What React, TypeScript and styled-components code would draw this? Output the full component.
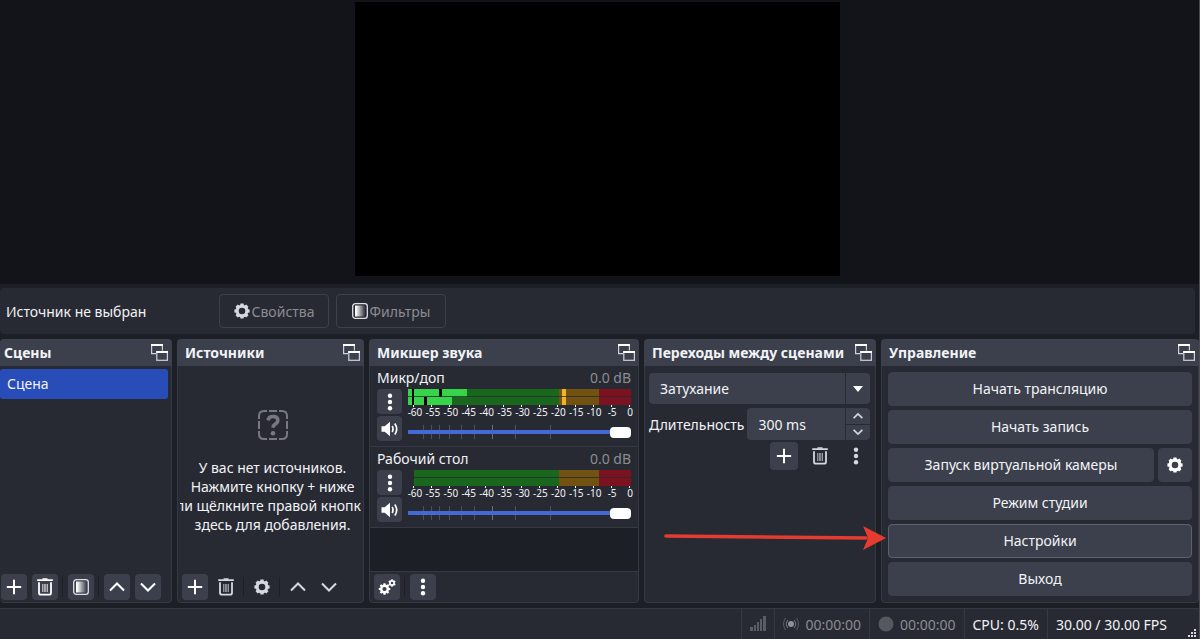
import React from 'react';
import styled, { createGlobalStyle, css } from 'styled-components';

const color = {
  base: '#1d1f26',
  panel: '#272a33',
  raised: '#3c404d',
  line: '#353945',
  text: '#f2f3f6',
  dim: '#8b8c91',
};

const Global = createGlobalStyle`
  * { box-sizing: border-box; }
  body {
    margin: 0;
    background: ${color.base};
    color: ${color.text};
    font: 14px/19px "Noto Sans", "Open Sans", sans-serif;
  }
  button, select, input { font: inherit; color: inherit; }
`;

const Window = styled.div`
  display: flex;
  flex-direction: column;
  min-height: 100vh;
  border-right: 1px solid #4a4c52;
  overflow: hidden;
`;

const Preview = styled.main`
  flex: 1;
  display: flex;
  justify-content: center;
  padding: 2px 4px 8px 0;
  background: #131419;
`;

const Canvas = styled.div`
  height: 274px;
  aspect-ratio: 485 / 274;
  background: #000;
`;

const ContextBar = styled.section`
  display: flex;
  align-items: center;
  height: 46px;
  margin: 4px 4px 5px 0;
  padding: 0 6px;
  border-radius: 4px;
  background: ${color.panel};
`;

const SourceName = styled.span`
  width: 213px;
`;

const OutlineButton = styled.button`
  display: flex;
  align-items: center;
  justify-content: center;
  gap: 2px;
  width: 110px;
  height: 34px;
  margin-right: 7px;
  padding: 0;
  border: 1px solid ${color.raised};
  border-radius: 4px;
  background: transparent;
  color: ${color.dim};
`;

const Docks = styled.div`
  display: grid;
  grid-template-columns: minmax(0, 172fr) minmax(0, 187fr) minmax(0, 270fr) minmax(0, 232fr) minmax(0, 318fr);
  gap: 5px;
  height: 264px;
`;

const DockFrame = styled.section`
  display: flex;
  flex-direction: column;
  min-width: 0;
  border-radius: 4px;
  background: ${color.panel};
  overflow: hidden;
`;

const DockHeader = styled.header<{ $flush?: boolean }>`
  display: flex;
  align-items: center;
  justify-content: space-between;
  flex: none;
  height: 27px;
  padding: 0 4px 0 ${(p) => (p.$flush ? 4 : 8)}px;
  background: ${color.raised};
`;

const DockTitle = styled.h2`
  margin: 0;
  font-size: 14px;
  font-weight: 700;
  white-space: nowrap;
`;

const BareButton = styled.button`
  display: flex;
  padding: 0;
  border: 0;
  background: none;
`;

const DockBody = styled.div<{ $flush?: boolean }>`
  display: flex;
  flex-direction: column;
  flex: 1;
  min-height: 0;
  border: 1px solid ${color.line};
  border-top: 0;
  border-left-width: ${(p) => (p.$flush ? 0 : 1)}px;
  border-radius: 0 0 4px 4px;
`;

const SceneList = styled.ul`
  flex: 1;
  margin: 0;
  padding: 3px 3px 0 0;
  list-style: none;
`;

const SceneItem = styled.li`
  height: 30px;
  padding: 0 7px;
  border-radius: 3px;
  background: #284cb8;
  line-height: 30px;
`;

const EmptySources = styled.div`
  display: flex;
  flex-direction: column;
  align-items: center;
  flex: 1;
  gap: 18px;
  margin: 0 2px;
  padding: 44px 0 0 4px;
  overflow: hidden;
  text-align: center;
  white-space: nowrap;
`;

const EmptyText = styled.p`
  margin: 0;
`;

const Toolbar = styled.div<{ $inset?: boolean }>`
  display: flex;
  align-items: center;
  padding: 2px 0 2px ${(p) => (p.$inset ? 4 : 1)}px;
  gap: 5px;
`;

const ToolButton = styled.button<{ $flat?: boolean; $tall?: boolean }>`
  display: flex;
  align-items: center;
  justify-content: center;
  flex: none;
  width: ${(p) => (p.$tall ? 28 : 26)}px;
  height: ${(p) => (p.$tall ? 28 : 26)}px;
  padding: 0;
  border: 0;
  border-radius: 4px;
  background: ${(p) => (p.$flat ? 'transparent' : color.raised)};
`;

const Divider = styled.span`
  width: 1px;
  height: 20px;
  margin-left: -1px;
  background: ${color.base};
`;

const Channel = styled.div`
  height: 81px;
  padding: 2px 7px 0;
  border-bottom: 1px solid ${color.line};
`;

const ChannelTop = styled.div`
  display: flex;
  justify-content: space-between;
  height: 20px;
`;

const Level = styled.span`
  color: ${color.dim};
`;

const ChannelBody = styled.div`
  display: flex;
  gap: 6px;
`;

const ChannelButtons = styled.div`
  display: flex;
  flex-direction: column;
  gap: 2px;
  padding-top: 1px;
`;

const SmallButton = styled(ToolButton)`
  width: 25px;
  height: 25px;
`;

const Meters = styled.div`
  flex: 1;
  min-width: 0;
  padding-top: 1px;
`;

const MeterArt = styled.svg`
  display: block;
  width: 100%;
  height: 18px;
`;

const Scale = styled.div`
  display: grid;
  grid-template-columns: repeat(13, 1fr);
  height: 11px;
  margin: 0 -8px 0 -2px;
  font-size: 10px;
  line-height: 11px;
  text-align: center;
`;

const Slider = styled.input`
  display: block;
  width: 100%;
  height: 14px;
  margin: 7px 0 0;
  appearance: none;
  background:
    linear-gradient(#4468d6, #4468d6) center / 100% 4px no-repeat,
    linear-gradient(90deg, transparent 15px, #4d515e 15px 16px, transparent 16px 23px, #4d515e 23px 24px, transparent 24px 31px, #4d515e 31px 32px, transparent 32px 41px, #4d515e 41px 42px, transparent 42px 53px, #4d515e 53px 54px, transparent 54px 66px, #4d515e 66px 67px, transparent 67px 84px, #6d717e 84px 85px, transparent 85px 107px, #4d515e 107px 108px, transparent 108px 142px, #4d515e 142px 143px, transparent 143px);
  &::-webkit-slider-thumb {
    appearance: none;
    width: 21px;
    height: 11px;
    border-radius: 4px;
    background: #fff;
  }
`;

const MixerRest = styled.div`
  flex: 1;
  background: ${color.base};
`;

const MixerToolbar = styled(Toolbar)`
  border-top: 1px solid ${color.line};
`;

const TransitionForm = styled.form`
  display: flex;
  flex-direction: column;
  gap: 4px;
  padding: 7px 5px 0 4px;
`;

const SelectBox = styled.div`
  position: relative;
  display: flex;
`;

const Select = styled.select`
  flex: 1;
  min-width: 0;
  height: 31px;
  padding: 0 11px;
  border: 0;
  border-radius: 4px;
  appearance: none;
  background: ${color.raised};
`;

const SelectArrow = styled.span`
  position: absolute;
  inset: 0 0 0 auto;
  display: flex;
  align-items: center;
  justify-content: center;
  width: 25px;
  border-left: 1px solid ${color.panel};
  pointer-events: none;
`;

const DurationRow = styled.div`
  display: flex;
  align-items: center;
  justify-content: space-between;
  gap: 3px;
`;

const Spin = styled.div`
  display: flex;
  flex: 1;
  height: 32px;
  border-radius: 4px;
  background: ${color.raised};
`;

const SpinInput = styled.input`
  flex: 1;
  width: 0;
  min-width: 0;
  padding: 0 11px;
  border: 0;
  background: none;
`;

const SpinButtons = styled.div`
  display: grid;
  grid-template-rows: 1fr 1fr;
  gap: 1px;
  width: 25px;
  border-left: 1px solid ${color.panel};
  background: linear-gradient(${color.panel}, ${color.panel}) center / 100% 1px no-repeat;
`;

const SpinButton = styled(BareButton)`
  align-items: center;
  justify-content: center;
`;

const TransitionTools = styled.div`
  display: flex;
  justify-content: flex-end;
  gap: 8px;
  margin-top: -2px;
`;

const Controls = styled.div`
  display: flex;
  flex-direction: column;
  gap: 4px;
  padding: 6px 6px 0;
`;

const ControlRow = styled.div`
  display: flex;
  gap: 4px;
`;

const ControlButton = styled.button<{ $focus?: boolean; $square?: boolean }>`
  display: flex;
  align-items: center;
  justify-content: center;
  height: 34px;
  padding: 0 0 1px;
  border: 1px solid ${(p) => (p.$focus ? '#5b6273' : color.raised)};
  border-radius: 4px;
  background: ${color.raised};
  ${(p) => (p.$square ? css`flex: none; width: 34px;` : css`flex: 1 0 auto;`)}
`;

const StatusBar = styled.footer`
  display: flex;
  justify-content: flex-end;
  height: 31px;
  margin-top: 5px;
  border-top: 1px solid ${color.line};
  background: ${color.panel};
`;

const StatusCell = styled.div<{ $dim?: boolean; $last?: boolean }>`
  display: flex;
  align-items: center;
  gap: 6px;
  padding: 0 ${(p) => (p.$last ? 32 : 8)}px 0 8px;
  border-left: 1px solid ${color.line};
  color: ${(p) => (p.$dim ? color.dim : color.text)};
  white-space: nowrap;
`;

const Grip = styled.svg`
  position: absolute;
  right: 2px;
  bottom: 0;
`;

const StatusEnd = styled.div`
  position: relative;
  display: flex;
`;

const Pointer = styled.svg`
  position: absolute;
  top: 186px;
  right: -10px;
  overflow: visible;
`;

const ArrowDock = styled.div`
  position: relative;
  display: grid;
  min-width: 0;
`;

const GearIcon = ({ size = 16, fill = '#fff' }: { size?: number; fill?: string }) => (
  <svg width={size} height={size} viewBox="0 0 16 16" aria-hidden="true">
    <circle cx="8" cy="8" r="4.8" fill="none" stroke={fill} strokeWidth="3" />
    {[0, 45, 90, 135, 180, 225, 270, 315].map((a) => (
      <path key={a} d="M6 3 6.5.4h3L10 3z" fill={fill} transform={`rotate(${a} 8 8)`} />
    ))}
  </svg>
);

const GearsIcon = () => (
  <svg width="18" height="18" viewBox="0 0 18 18" aria-hidden="true">
    <circle cx="6.5" cy="11" r="3.3" fill="none" stroke="#fff" strokeWidth="2.4" />
    {[0, 45, 90, 135, 180, 225, 270, 315].map((a) => (
      <path key={a} d="M5.2 7.4 5.5 5.3h2l.3 2.1z" fill="#fff" transform={`rotate(${a} 6.5 11)`} />
    ))}
    <circle cx="14" cy="5" r="2.1" fill="none" stroke="#fff" strokeWidth="1.7" />
    {[0, 60, 120, 180, 240, 300].map((a) => (
      <path key={a} d="M13 2.6 13.3 1.2h1.4l.3 1.4z" fill="#fff" transform={`rotate(${a} 14 5)`} />
    ))}
  </svg>
);

const PlusIcon = () => (
  <svg width="16" height="16" viewBox="0 0 16 16" aria-hidden="true">
    <path d="M8 .8v14.4M.8 8h14.4" stroke="#fff" strokeWidth="2" />
  </svg>
);

const TrashIcon = ({ fill = '#fff' }: { fill?: string }) => (
  <svg width="16" height="18" viewBox="0 0 16 18" fill="none" stroke={fill} aria-hidden="true">
    <path d="M.2 2.2h15.6" strokeWidth="1.8" />
    <path d="M5.5 1h5" strokeWidth="1.4" />
    <path d="M2 4.3v10.4q0 2 2 2h8q2 0 2-2V4.3" strokeWidth="1.8" />
    <path d="M5.7 6v8M7.3 6v8M8.8 6v8M10.4 6v8" strokeWidth=".9" opacity=".8" />
  </svg>
);

const FilterIcon = () => (
  <svg width="16" height="16" viewBox="0 0 16 16" aria-hidden="true">
    <defs>
      <linearGradient id="fade">
        <stop offset="0.1" stopColor="#fff" />
        <stop offset="1" stopColor="#fff" stopOpacity="0.05" />
      </linearGradient>
    </defs>
    <rect x="0.7" y="0.7" width="14.6" height="14.6" rx="2.6" fill="none" stroke="#dfe0e6" strokeWidth="1.3" />
    <rect x="3" y="2.5" width="10" height="11" fill="url(#fade)" />
  </svg>
);

const Chevron = ({ down, size = 16, stroke = '#fff' }: { down?: boolean; size?: number; stroke?: string }) => (
  <svg width={size} height={size} viewBox="0 0 16 16" fill="none" aria-hidden="true">
    <path d={down ? 'M1 4.5l7 7 7-7' : 'M1 11.5l7-7 7 7'} stroke={stroke} strokeWidth={size < 16 ? 2.6 : 2.1} />
  </svg>
);

const DotsIcon = ({ fill = '#fff' }: { fill?: string }) => (
  <svg width="6" height="18" viewBox="0 0 6 18" fill={fill} aria-hidden="true">
    <circle cx="3" cy="2.8" r="2.2" />
    <circle cx="3" cy="9" r="2.2" />
    <circle cx="3" cy="15.2" r="2.2" />
  </svg>
);

const SpeakerIcon = () => (
  <svg width="18" height="16" viewBox="0 0 18 16" aria-hidden="true">
    <path d="M.5 5.2h3.2L9 .8v14.4l-5.3-4.4H.5z" fill="#fff" />
    <path d="M11.2 5q1.6 3 0 6M13.8 2.4q3.8 5.6 0 11.2" fill="none" stroke="#fff" strokeWidth="1.7" />
  </svg>
);

const FloatIcon = () => (
  <svg width="17" height="17" viewBox="0 0 17 17" fill="none" stroke="#cfd1d8" aria-hidden="true">
    <path d="M5 9.6H.6V1h10.8v5.5" strokeWidth="1.2" />
    <path d="M0 1h12" stroke="#fff" strokeWidth="2" />
    <rect x="5.8" y="8" width="10.6" height="8.3" strokeWidth="1.2" />
    <path d="M5.2 8H17" stroke="#fff" strokeWidth="2" />
  </svg>
);

const MissingIcon = () => (
  <svg width="30" height="30" viewBox="0 0 30 30" fill="none" stroke="#77797e" strokeWidth="2" aria-hidden="true">
    <path d="M1 9V6q0-5 5-5h3M21 1h3q5 0 5 5v3M29 21v3q0 5-5 5h-3M9 29H6q-5 0-5-5v-3M11 1h8M11 29h8M1 11v8M29 11v8" />
    <path d="M10 10.3q.7-3.8 5-3.8 4.8 0 4.8 3.7 0 2.3-2.5 3.9-2.2 1.4-2.2 3.6" strokeWidth="3.6" />
    <circle cx="15" cy="23.2" r="2.3" fill="#77797e" stroke="none" />
  </svg>
);

const ticks = [-60, -55, -50, -45, -40, -35, -30, -25, -20, -15, -10, -5, 0];

const Meter = ({ active }: { active?: boolean }) => (
  <MeterArt viewBox="0 0 223 18" preserveAspectRatio="none" shapeRendering="crispEdges" aria-hidden="true">
    {[0, 8].map((y) => (
      <g key={y} transform={`translate(0 ${y})`}>
        <rect x="6" width="145" height="8" fill="#19661d" />
        <rect x="151" width="40" height="8" fill="#725210" />
        <rect x="191" width="32" height="8" fill="#7c1220" />
      </g>
    ))}
    {active && (
      <g>
        <rect width="59" height="8" fill="#37d34b" />
        <rect y="8" width="44" height="8" fill="#37d34b" />
        <path d="M4 0h2v16H4zM31 0h3v8h-3zM16 8h3v8h-3z" fill="#000" />
        <rect x="154" width="4" height="16" fill="#f2b32a" />
      </g>
    )}
    <rect x="0" y="7" width="223" height="1" fill={color.panel} opacity="0.8" />
    {ticks.map((t, i) => (
      <rect key={t} x={5 + i * 18} y="16" width="1" height="2" fill="#fff" />
    ))}
  </MeterArt>
);

const Dock = ({ title, flush, children }: { title: string; flush?: boolean; children: React.ReactNode }) => (
  <DockFrame>
    <DockHeader $flush={flush}>
      <DockTitle>{title}</DockTitle>
      <BareButton aria-label="Открепить"><FloatIcon /></BareButton>
    </DockHeader>
    <DockBody $flush={flush}>{children}</DockBody>
  </DockFrame>
);

const MixerChannel = ({ name, active }: { name: string; active?: boolean }) => (
  <Channel>
    <ChannelTop><span>{name}</span><Level>0.0 dB</Level></ChannelTop>
    <ChannelBody>
      <ChannelButtons>
        <SmallButton aria-label="Меню"><DotsIcon /></SmallButton>
        <SmallButton aria-label="Звук"><SpeakerIcon /></SmallButton>
      </ChannelButtons>
      <Meters>
        <Meter active={active} />
        <Scale>{ticks.map((t) => <span key={t}>{t}</span>)}</Scale>
        <Slider type="range" min={0} max={100} defaultValue={100} aria-label={name} />
      </Meters>
    </ChannelBody>
  </Channel>
);

const soft = '#d6d8e0';

export default function App() {
  return (
    <Window>
      <Global />
      <Preview><Canvas /></Preview>
      <ContextBar>
        <SourceName>Источник не выбран</SourceName>
        <OutlineButton><GearIcon fill={soft} />Свойства</OutlineButton>
        <OutlineButton><FilterIcon />Фильтры</OutlineButton>
      </ContextBar>
      <Docks>
        <Dock title="Сцены" flush>
          <SceneList><SceneItem>Сцена</SceneItem></SceneList>
          <Toolbar>
            <ToolButton aria-label="Добавить"><PlusIcon /></ToolButton>
            <ToolButton aria-label="Удалить"><TrashIcon /></ToolButton>
            <Divider />
            <ToolButton aria-label="Фильтры"><FilterIcon /></ToolButton>
            <Divider />
            <ToolButton aria-label="Вверх"><Chevron /></ToolButton>
            <ToolButton aria-label="Вниз"><Chevron down /></ToolButton>
          </Toolbar>
        </Dock>
        <Dock title="Источники">
          <EmptySources>
            <MissingIcon />
            <EmptyText>
              У вас нет источников.<br />Нажмите кнопку + ниже<br />или щёлкните правой кнопкой<br />здесь для добавления.
            </EmptyText>
          </EmptySources>
          <Toolbar $inset>
            <ToolButton aria-label="Добавить"><PlusIcon /></ToolButton>
            <ToolButton $flat aria-label="Удалить"><TrashIcon fill={soft} /></ToolButton>
            <Divider />
            <ToolButton $flat aria-label="Свойства"><GearIcon fill={soft} /></ToolButton>
            <Divider />
            <ToolButton $flat aria-label="Вверх"><Chevron stroke={soft} /></ToolButton>
            <ToolButton $flat aria-label="Вниз"><Chevron down stroke={soft} /></ToolButton>
          </Toolbar>
        </Dock>
        <Dock title="Микшер звука">
          <MixerChannel name="Микр/доп" active />
          <MixerChannel name="Рабочий стол" />
          <MixerRest />
          <MixerToolbar $inset>
            <ToolButton aria-label="Дополнительно"><GearsIcon /></ToolButton>
            <Divider />
            <ToolButton aria-label="Меню"><DotsIcon /></ToolButton>
          </MixerToolbar>
        </Dock>
        <ArrowDock>
          <Dock title="Переходы между сценами">
            <TransitionForm>
              <SelectBox>
                <Select aria-label="Переход" defaultValue="fade"><option value="fade">Затухание</option></Select>
                <SelectArrow>
                  <svg width="10" height="6" viewBox="0 0 10 6" aria-hidden="true"><path d="M0 0h10L5 6z" fill="#fff" /></svg>
                </SelectArrow>
              </SelectBox>
              <DurationRow>
                <label htmlFor="duration">Длительность</label>
                <Spin>
                  <SpinInput id="duration" defaultValue="300 ms" />
                  <SpinButtons>
                    <SpinButton type="button" aria-label="Больше"><Chevron size={10} stroke={soft} /></SpinButton>
                    <SpinButton type="button" aria-label="Меньше"><Chevron down size={10} stroke={soft} /></SpinButton>
                  </SpinButtons>
                </Spin>
              </DurationRow>
              <TransitionTools>
                <ToolButton type="button" $tall aria-label="Добавить"><PlusIcon /></ToolButton>
                <ToolButton type="button" $tall $flat aria-label="Удалить"><TrashIcon fill={soft} /></ToolButton>
                <ToolButton type="button" $tall $flat aria-label="Меню"><DotsIcon fill={soft} /></ToolButton>
              </TransitionTools>
            </TransitionForm>
          </Dock>
          <Pointer width="222" height="26" viewBox="0 0 222 26" aria-hidden="true">
            <path d="M2 11l200 2" stroke="#e63b30" strokeWidth="3.6" strokeLinecap="round" />
            <path d="M199 1l23 12-23 12 5-12z" fill="#e63b30" />
          </Pointer>
        </ArrowDock>
        <Dock title="Управление">
          <Controls>
            <ControlButton>Начать трансляцию</ControlButton>
            <ControlButton>Начать запись</ControlButton>
            <ControlRow>
              <ControlButton>Запуск виртуальной камеры</ControlButton>
              <ControlButton $square aria-label="Настроить камеру"><GearIcon /></ControlButton>
            </ControlRow>
            <ControlButton>Режим студии</ControlButton>
            <ControlButton $focus>Настройки</ControlButton>
            <ControlButton>Выход</ControlButton>
          </Controls>
        </Dock>
      </Docks>
      <StatusBar>
        <StatusCell $dim>
          <svg width="16" height="16" viewBox="0 0 16 16" fill="#5b5d64" aria-hidden="true">
            <path d="M0 11h3v4H0zM4 9h2v6H4zM7 6h2v9H7zM10 3h2v12h-2zM13 0h3v15h-3z" />
          </svg>
        </StatusCell>
        <StatusCell $dim>
          <svg width="16" height="16" viewBox="0 0 16 16" fill="none" stroke="#777980" aria-hidden="true">
            <circle cx="8" cy="8" r="3" fill="#8f9197" stroke="none" />
            <path d="M4.6 4q-3 4 0 8M11.4 4q3 4 0 8" />
            <path d="M2.5 2q-4 6 0 12M13.5 2q4 6 0 12" opacity="0.6" />
          </svg>
          00:00:00
        </StatusCell>
        <StatusCell $dim>
          <svg width="16" height="16" viewBox="0 0 16 16" aria-hidden="true"><circle cx="8" cy="8" r="7.5" fill="#56585f" /></svg>
          00:00:00
        </StatusCell>
        <StatusCell>CPU: 0.5%</StatusCell>
        <StatusEnd>
          <StatusCell $last>30.00 / 30.00 FPS</StatusCell>
          <Grip width="10" height="10" viewBox="0 0 10 10" fill="#d8d9dd" aria-hidden="true">
            <path d="M7 0h2v2H7zM4 3h2v2H4zM7 3h2v2H7zM1 6h2v2H1zM4 6h2v2H4zM7 6h2v2H7z" />
          </Grip>
        </StatusEnd>
      </StatusBar>
    </Window>
  );
}
